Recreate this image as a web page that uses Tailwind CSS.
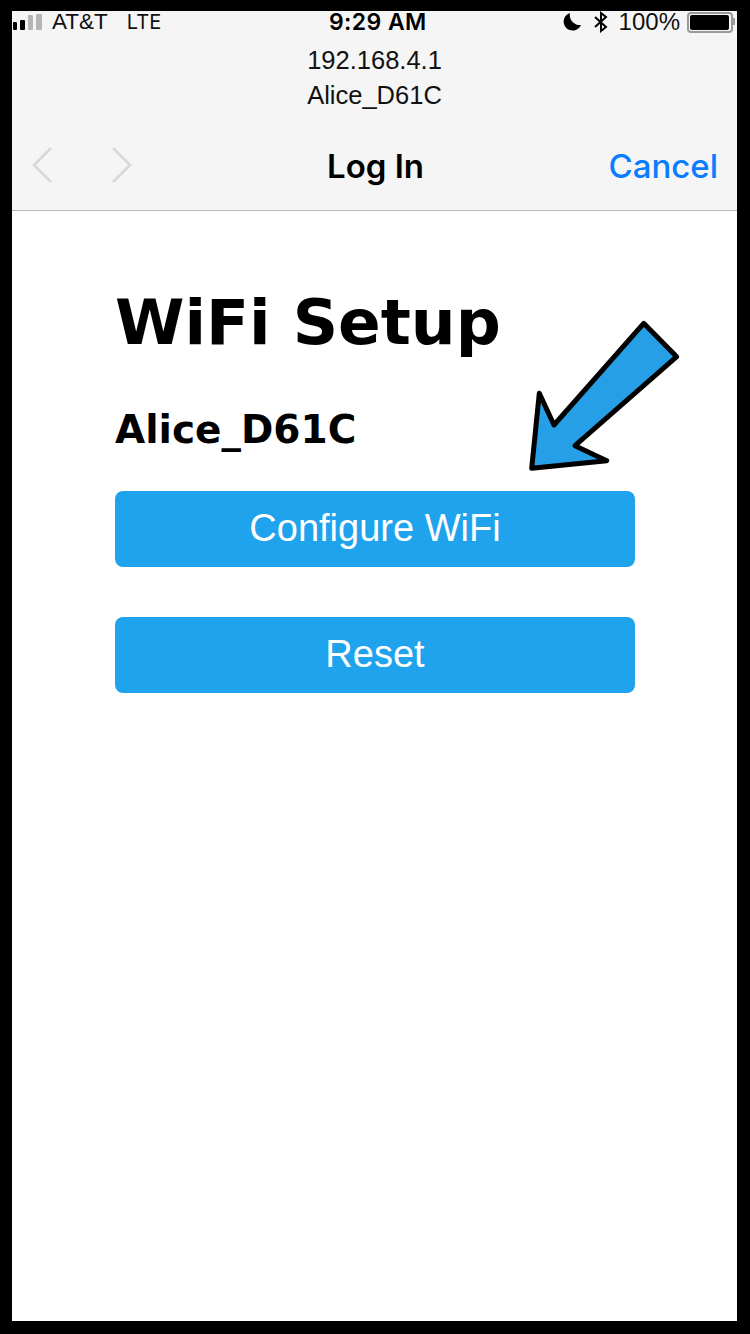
<!DOCTYPE html>
<html lang="en">
<head>
    <meta charset="UTF-8">
    <meta name="viewport" content="width=device-width, initial-scale=1.0">
    <title>WiFi Setup</title>
    <script src="https://cdn.jsdelivr.net/npm/@tailwindcss/browser@4"></script>
</head>

<body class="w-[750px] h-[1334px] bg-black overflow-hidden pl-[12px] pr-[13px] pt-[11px] pb-[13px] font-['Inter',sans-serif]">

    <div class="relative h-full flex flex-col bg-white">

        <!-- Header -->
        <div class="h-[200px] shrink-0 bg-[#f5f5f5] border-b border-[#b8b8b8] flex flex-col">

            <!-- Status bar -->
            <div class="relative h-[22px] shrink-0 flex items-center justify-between leading-[22px] text-[#111] font-['Liberation_Sans',sans-serif]">
                <div class="flex items-center">
                    <div class="flex items-end gap-[3px] ml-[1px] mr-[10px] h-[16px]">
                        <span class="w-[4px] h-[8px] rounded-[1px] bg-black"></span>
                        <span class="w-[5px] h-[10px] rounded-[1px] bg-black"></span>
                        <span class="w-[5px] h-[15px] rounded-[1px] bg-[#b5b5b5]"></span>
                        <span class="w-[6px] h-[16px] rounded-[1px] bg-[#b5b5b5]"></span>
                    </div>
                    <span class="text-[22.5px]">AT&amp;T</span>
                    <span class="ml-[19px] text-[20px] font-['Inter',sans-serif]">LTE</span>
                </div>
                <span class="absolute left-[317px] top-0 text-[23px] tracking-[0.4px] font-semibold text-black font-['Inter',sans-serif]">9:29 AM</span>
                <div class="flex items-center">
                    <svg width="20" height="20" viewBox="0 0 20 20" class="mr-[11px]"><path d="M8 1 A9 9 0 1 0 19 13 A10 10 0 0 1 8 1 Z" fill="#000"/></svg>
                    <svg width="16" height="22" viewBox="0 0 16 22" class="mr-[10px]"><path d="M2 6 L13 16 L8 20 V2 L13 6 L2 16" fill="none" stroke="#000" stroke-width="2"/></svg>
                    <span class="text-[24px]">100%</span>
                    <div class="relative ml-[7px] mr-[4px] w-[46px] h-[21px] border-2 border-[#9a9a9a] rounded-[4px] p-[1px] pr-[2px]">
                        <div class="w-full h-full bg-black rounded-[2px]"></div>
                        <span class="absolute right-[-4px] top-[4px] w-[2px] h-[7px] bg-[#9a9a9a]"></span>
                    </div>
                </div>
            </div>

            <!-- Host and network -->
            <div class="mt-[10px] flex flex-col items-center text-[25.5px] leading-[35px] text-[#111] font-['Liberation_Sans',sans-serif]">
                <span>192.168.4.1</span>
                <span>Alice_D61C</span>
            </div>

            <!-- Nav row -->
            <div class="relative mt-[30px] h-[44px] pt-[4px] flex items-center justify-center">
                <svg width="22" height="38" viewBox="0 0 22 38" class="absolute left-[19px] top-[3px]"><path d="M20 2 L3 19 L20 36" fill="none" stroke="#d8d8d8" stroke-width="2.5"/></svg>
                <svg width="22" height="38" viewBox="0 0 22 38" class="absolute left-[99px] top-[3px]"><path d="M2 2 L19 19 L2 36" fill="none" stroke="#d8d8d8" stroke-width="2.5"/></svg>
                <span class="ml-[2px] text-[33px] font-semibold text-black">Log In</span>
                <span class="absolute right-[19px] top-[-1px] text-[33px] font-medium text-[#0a7cff]">Cancel</span>
            </div>
        </div>

        <!-- Page content -->
        <div class="flex-1 px-[103px] pt-[72px]">
            <h1 class="font-['DejaVu_Sans',sans-serif] font-bold text-[63px] leading-[80px] text-black">WiFi Setup</h1>
            <h2 class="mt-[40px] font-['DejaVu_Sans',sans-serif] font-bold text-[39px] leading-[54px] text-black">Alice_D61C</h2>
            <button class="mt-[34px] w-[520px] h-[76px] pb-[2px] rounded-[8px] bg-[#1fa3ec] text-white text-[38px] font-['Liberation_Sans',sans-serif]">Configure WiFi</button>
            <button class="mt-[50px] w-[520px] h-[76px] pb-[2px] rounded-[8px] bg-[#1fa3ec] text-white text-[38px] font-['Liberation_Sans',sans-serif]">Reset</button>
        </div>

        <!-- Annotation arrow -->
        <svg width="190" height="170" viewBox="0 0 190 170" class="absolute left-[498px] top-[299px]">
            <path d="M133.7 13.3 L166.7 46.7 L65 135.7 L96.7 150.7 L21.7 158.3 L29.3 83.3 L44 115 Z" fill="#269fe6" stroke="#000" stroke-width="5" stroke-linejoin="round"/>
        </svg>
    </div>

</body>
</html>
